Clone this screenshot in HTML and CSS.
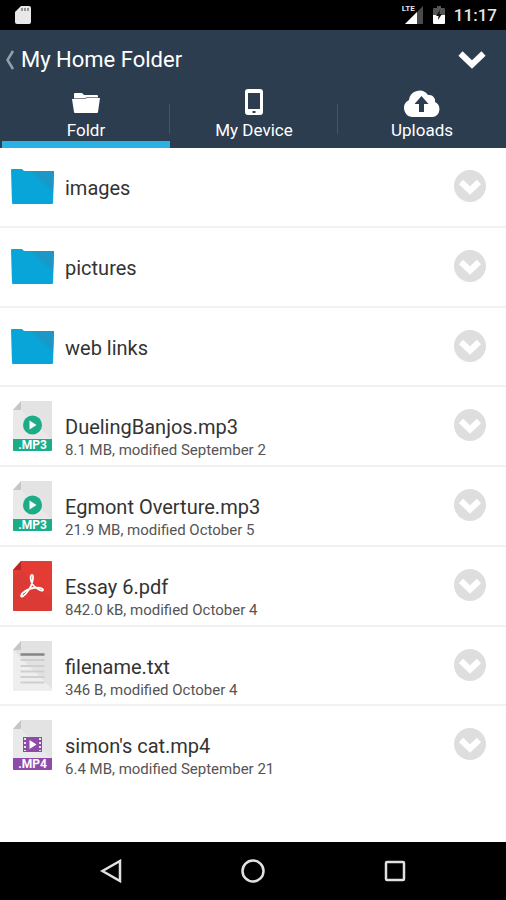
FILE: index.html
```html
<!DOCTYPE html>
<html lang="en">
<head>
  <meta charset="UTF-8">
  <meta name="viewport" content="width=device-width, initial-scale=1.0">
  <title>My Home Folder</title>
  <link rel="stylesheet" href="styles.css">
</head>
<body>
  <!-- shared icons -->
  <svg class="sprite" aria-hidden="true">
    <symbol id="folder" viewBox="0 0 44 50">
      <path fill="#0aa5d8" d="M0 8q0-1 1-1h10l2 2h29q1 0 1 1l-1 31q0 1-1 1H2q-1 0-1-1z"/>
      <path fill="#1a98c6" d="M20 9h22q1 0 1 1l-1 20z"/>
    </symbol>
    <symbol id="more" viewBox="0 0 32 32">
      <circle cx="16" cy="16" r="16" fill="#dedede"/>
      <path fill="none" stroke="#fff" stroke-width="6" d="M7 12l9 8.500 9-8.500"/>
    </symbol>
    <symbol id="page" viewBox="0 0 44 50">
      <path fill="#e9e9e9" d="M10 0h30q1 0 1 1v48q0 1-1 1H3q-1 0-1-1V9z"/>
      <path fill="#dcdcdc" d="M10 9l31 30V1q0-1-1-1H10z" opacity=".45"/>
      <path fill="#c6c6c6" d="M10 0v8q0 1-1 1H2z"/>
    </symbol>
    <symbol id="mp3" viewBox="0 0 44 50">
      <use href="#page"/>
      <circle cx="21.500" cy="24" r="9.500" fill="#1dac88"/>
      <path fill="#fff" d="M18.500 19.500v9l7-4.500z"/>
    </symbol>
    <symbol id="mp4" viewBox="0 0 44 50">
      <use href="#page"/>
      <path fill="#8f4ba8" d="M12 17h19v15H12z"/>
      <path stroke="#e7e7e7" stroke-width="2" stroke-dasharray="2 2" d="M14 18v13M29 18v13"/>
      <path fill="#fff" d="M18.500 20v9l7-4.500z"/>
    </symbol>
    <symbol id="pdf" viewBox="0 0 44 50">
      <path fill="#e53b35" d="M10 0h30q1 0 1 1v48q0 1-1 1H3q-1 0-1-1V9z"/>
      <path fill="#d43a35" d="M10 9l31 30v10q0 1-1 1H3q-1 0-1-1V17z" opacity=".5"/>
      <path fill="#b52b29" d="M10 0v8q0 1-1 1H2z"/>
      <path fill="none" stroke="#fff" stroke-width="1.800" stroke-linejoin="round" d="M10 35c1-4 7-7 12-8s10 0 10 2-7-1-10-5-3-10-1-10 1 6-1 11-9 13-10 10z"/>
    </symbol>
    <symbol id="txt" viewBox="0 0 44 50">
      <path fill="#eee" d="M10 0h30q1 0 1 1v48q0 1-1 1H3q-1 0-1-1V9z"/>
      <path fill="#e2e2e2" d="M10 0h30q1 0 1 1v47L2 9z"/>
      <path fill="#c6c6c6" d="M10 0v8q0 1-1 1H2z"/>
      <path stroke="#858585" stroke-width="2.500" d="M9.500 13.500h24"/>
      <path stroke="#cfcfcf" stroke-width="2" d="M9.500 19h24M9.500 25h24M9.500 30.500h24M9.500 36h24M9.500 41.500h24"/>
    </symbol>
  </svg>

  <div class="app">
    <div class="status">
      <svg width="16" height="20" viewBox="0 0 16 20">
        <path fill="#e8e8e8" d="M6 1h8q2 0 2 2v14q0 2-2 2H2q-2 0-2-2V7z"/>
        <path stroke="#777" stroke-width="1.500" d="M7 3v3M10 3v3M13 3v3"/>
      </svg>
      <div class="status-right">
        <div class="signal">
          <svg width="22" height="20" viewBox="0 0 22 20">
            <path fill="#4a4a4a" d="M21 1v18H3z"/>
            <path fill="#fff" d="M15 7v12H3z"/>
          </svg>
          <span class="lte">LTE</span>
        </div>
        <svg width="12" height="20" viewBox="0 0 12 20">
          <path fill="#555" d="M4 1h4v2h3q1 0 1 1v6H0V4q0-1 1-1h3z"/>
          <path fill="#fff" d="M0 10h12v8q0 1-1 1H1q-1 0-1-1z"/>
          <path fill="#111" d="M7 5l-4 6h2.500L5 15l4-6H6.500z"/>
        </svg>
        <span class="clock">11:17</span>
      </div>
    </div>

    <header class="header">
      <div class="title-bar">
        <button class="back">
          <svg width="10" height="20" viewBox="0 0 10 20" aria-hidden="true">
            <path fill="none" stroke="#94a0ab" stroke-width="2.500" d="M8 1L2.500 10 8 19"/>
          </svg>
          My Home Folder
        </button>
        <button class="menu" aria-label="Folder menu">
          <svg width="28" height="20" viewBox="0 0 28 20">
            <path fill="none" stroke="#fff" stroke-width="6" d="M2.500 3.500L14 14.500 25.500 3.500"/>
          </svg>
        </button>
      </div>
      <nav class="tabs">
        <button class="tab active">
          <svg width="28" height="28" viewBox="0 0 28 28" aria-hidden="true">
            <path fill="#fff" d="M2 5q0-1 1-1h7l2 2h13q1 0 1 1v2H2z"/>
            <path stroke="#7b8793" d="M2 9.500h11l2-1h11"/>
            <path fill="#fff" d="M0 10h13l2-1h13l-2 14q0 1-1 1H3q-1 0-1-1z"/>
          </svg>
          Foldr
        </button>
        <button class="tab">
          <svg width="28" height="28" viewBox="0 0 28 28" aria-hidden="true">
            <path fill="#fff" fill-rule="evenodd" d="M8 0h12q3 0 3 3v20q0 3-3 3H8q-3 0-3-3V3q0-3 3-3zM8 4v16h12V4zM12.500 22v2h3v-2z"/>
          </svg>
          My Device
        </button>
        <button class="tab">
          <svg width="38" height="28" viewBox="0 0 38 28" aria-hidden="true">
            <path fill="#fff" d="M9 28a9 9 0 0 1-3-17A10.500 10.500 0 0 1 25 6a6 6 0 0 1 7 7 8 8 0 0 1-2 15z"/>
            <path fill="#2c3d50" d="M18.500 7l7 8h-4.500v8h-5v-8h-4.500z"/>
          </svg>
          Uploads
        </button>
      </nav>
    </header>

    <ul class="files">
      <li class="row">
        <a class="file" href="#">
          <span class="icon"><svg width="44" height="50"><use href="#folder"/></svg></span>
          <span class="info"><span class="name">images</span></span>
        </a>
        <button class="more" aria-label="Options for images"><svg width="32" height="32"><use href="#more"/></svg></button>
      </li>
      <li class="row">
        <a class="file" href="#">
          <span class="icon"><svg width="44" height="50"><use href="#folder"/></svg></span>
          <span class="info"><span class="name">pictures</span></span>
        </a>
        <button class="more" aria-label="Options for pictures"><svg width="32" height="32"><use href="#more"/></svg></button>
      </li>
      <li class="row">
        <a class="file" href="#">
          <span class="icon"><svg width="44" height="50"><use href="#folder"/></svg></span>
          <span class="info"><span class="name">web links</span></span>
        </a>
        <button class="more" aria-label="Options for web links"><svg width="32" height="32"><use href="#more"/></svg></button>
      </li>
      <li class="row">
        <a class="file" href="#">
          <span class="icon"><svg width="44" height="50"><use href="#mp3"/></svg><span class="ext">.MP3</span></span>
          <span class="info">
            <span class="name">DuelingBanjos.mp3</span>
            <span class="meta">8.1 MB, modified September 2</span>
          </span>
        </a>
        <button class="more" aria-label="Options for DuelingBanjos.mp3"><svg width="32" height="32"><use href="#more"/></svg></button>
      </li>
      <li class="row">
        <a class="file" href="#">
          <span class="icon"><svg width="44" height="50"><use href="#mp3"/></svg><span class="ext">.MP3</span></span>
          <span class="info">
            <span class="name">Egmont Overture.mp3</span>
            <span class="meta">21.9 MB, modified October 5</span>
          </span>
        </a>
        <button class="more" aria-label="Options for Egmont Overture.mp3"><svg width="32" height="32"><use href="#more"/></svg></button>
      </li>
      <li class="row">
        <a class="file" href="#">
          <span class="icon"><svg width="44" height="50"><use href="#pdf"/></svg></span>
          <span class="info">
            <span class="name">Essay 6.pdf</span>
            <span class="meta">842.0 kB, modified October 4</span>
          </span>
        </a>
        <button class="more" aria-label="Options for Essay 6.pdf"><svg width="32" height="32"><use href="#more"/></svg></button>
      </li>
      <li class="row">
        <a class="file" href="#">
          <span class="icon"><svg width="44" height="50"><use href="#txt"/></svg></span>
          <span class="info">
            <span class="name">filename.txt</span>
            <span class="meta">346 B, modified October 4</span>
          </span>
        </a>
        <button class="more" aria-label="Options for filename.txt"><svg width="32" height="32"><use href="#more"/></svg></button>
      </li>
      <li class="row">
        <a class="file" href="#">
          <span class="icon"><svg width="44" height="50"><use href="#mp4"/></svg><span class="ext video">.MP4</span></span>
          <span class="info">
            <span class="name">simon's cat.mp4</span>
            <span class="meta">6.4 MB, modified September 21</span>
          </span>
        </a>
        <button class="more" aria-label="Options for simon's cat.mp4"><svg width="32" height="32"><use href="#more"/></svg></button>
      </li>
    </ul>

    <div class="navbar">
      <button aria-label="Back">
        <svg width="24" height="24" viewBox="0 0 24 24"><path d="M21 2v20L3.500 12z"/></svg>
      </button>
      <button aria-label="Home">
        <svg width="24" height="24" viewBox="0 0 24 24"><circle cx="12" cy="12" r="10.500"/></svg>
      </button>
      <button aria-label="Recent apps">
        <svg width="24" height="24" viewBox="0 0 24 24"><rect x="3" y="3" width="18" height="18" rx="1"/></svg>
      </button>
    </div>
  </div>
</body>
</html>
```

FILE: styles.css
```css
* {
  box-sizing: border-box;
}
body {
  margin: 0;
  font-family: Roboto, Arial, sans-serif;
  background: #fff;
}
button {
  padding: 0;
  border: none;
  background: none;
  color: inherit;
  font-family: inherit;
  cursor: pointer;
}
svg {
  display: block;
  flex-shrink: 0;
}
.sprite {
  position: absolute;
  width: 0;
  height: 0;
}
.app {
  display: flex;
  flex-direction: column;
  min-height: 100vh;
}
.status {
  display: flex;
  justify-content: space-between;
  align-items: center;
  height: 30px;
  padding: 0 9px 0 15px;
  background: #000;
  color: #e6e6e6;
}
.status-right {
  display: flex;
  align-items: center;
  gap: 9px;
}
.signal {
  position: relative;
}
.lte {
  position: absolute;
  top: 0;
  left: 0;
  font-size: 8px;
  font-weight: 700;
  line-height: 8px;
}
.clock {
  font-size: 17px;
  font-weight: 500;
}
.header {
  background: #2c3d50;
  color: #fff;
}
.title-bar {
  display: flex;
  justify-content: space-between;
  align-items: center;
  height: 59px;
  padding: 0 20px 0 5px;
}
.back {
  display: flex;
  align-items: center;
  gap: 6px;
  font-size: 22px;
}
.tabs {
  display: grid;
  grid-template-columns: repeat(3, 1fr);
  padding-left: 2px;
}
.tab {
  display: flex;
  flex-direction: column;
  align-items: center;
  gap: 1px;
  height: 59px;
  border-bottom: 7px solid transparent;
  font-size: 17px;
  line-height: 24px;
  background: linear-gradient(#465566, #465566) no-repeat right 15px / 1px 30px;
}
.tab:last-child {
  background: none;
}
.tab.active {
  border-bottom-color: #2ab0e2;
}
.files {
  flex: 1;
  display: flex;
  flex-direction: column;
  margin: 0;
  padding: 0 0 56px;
  list-style: none;
}
.row {
  flex: 1 0 0px;
  display: flex;
  align-items: flex-start;
  min-height: 78px;
  padding: 0 20px 0 11px;
  border-bottom: 2px solid #f1f1f1;
}
.row:last-child {
  border-bottom-color: transparent;
}
.file {
  flex: 1;
  display: flex;
  gap: 10px;
  color: #333;
  text-decoration: none;
}
.icon {
  position: relative;
  height: 50px;
  margin-top: 14px;
}
.ext {
  position: absolute;
  left: 2px;
  right: 3px;
  bottom: 0;
  border-radius: 0 0 1px 1px;
  background: #1dac88;
  color: #fff;
  font-size: 12px;
  font-weight: 700;
  line-height: 12px;
  text-align: center;
}
.ext.video {
  background: #8f4ba8;
}
.info {
  padding-top: 27px;
}
.name,
.meta {
  display: block;
}
.name {
  font-size: 20px;
  line-height: 26px;
}
.meta {
  font-size: 15px;
  line-height: 20px;
  color: #555;
}
.more {
  margin-top: 22px;
}
.navbar {
  display: flex;
  justify-content: center;
  align-items: center;
  gap: 118px;
  height: 58px;
  background: #000;
}
.navbar svg {
  fill: none;
  stroke: #e0e0e0;
  stroke-width: 2.5;
}
```
